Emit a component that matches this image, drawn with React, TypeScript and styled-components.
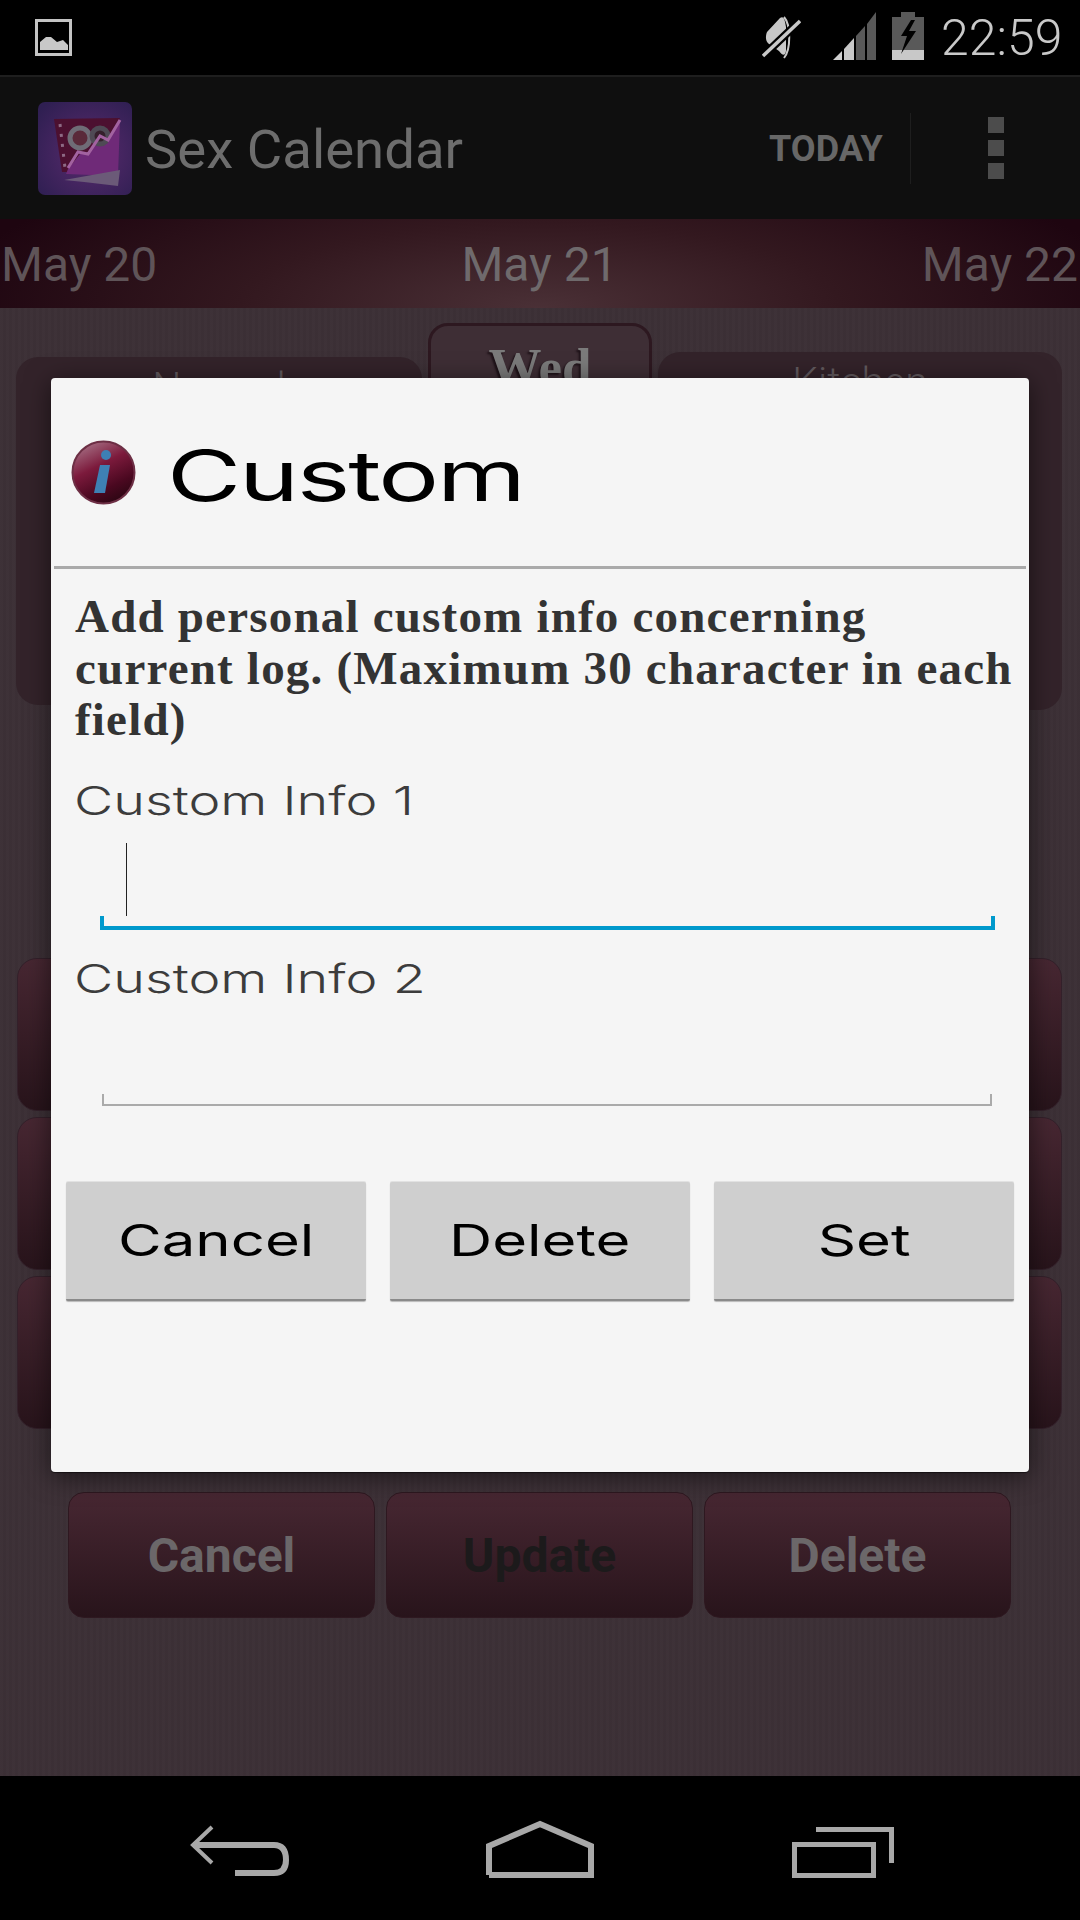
import React from "react";
import styled, { createGlobalStyle } from "styled-components";

const Global = createGlobalStyle`
  html, body { margin: 0; padding: 0; background: #000; }
  * { box-sizing: border-box; }
`;

const Screen = styled.div`
  position: relative;
  width: 1080px;
  height: 1920px;
  display: flex;
  flex-direction: column;
  overflow: hidden;
  font-family: Roboto, "Liberation Sans", sans-serif;
`;

const StatusBar = styled.div`
  height: 75px;
  flex: none;
  background: #000;
  display: flex;
  align-items: flex-start;
  padding: 12px 21px 0 35px;
`;

const StatusLeft = styled.div`
  flex: 1;
  padding-top: 7px;
  display: flex;
`;

const StatusIcon = styled.svg<{ $ml?: number; $mt?: number }>`
  display: block;
  flex: none;
  margin-left: ${(p) => p.$ml ?? 0}px;
  margin-top: ${(p) => p.$mt ?? 0}px;
`;

const Clock = styled.div`
  font-size: 50px;
  font-weight: 300;
  line-height: 48px;
  color: #c9c9c9;
  margin: 2px 0 0 17px;
  width: 118px;
  white-space: nowrap;
`;

const ActionBar = styled.div`
  height: 144px;
  flex: none;
  background: #0f0f0f;
  border-top: 2px solid #1e1e1e;
  display: flex;
  align-items: center;
  padding: 0 76px 0 38px;
`;

const AppTitle = styled.div`
  flex: 1;
  margin: 2px 0 0 13px;
  font-size: 54.500px;
  color: #6d6d6d;
`;

const TodayAction = styled.div`
  font-size: 36px;
  font-weight: 700;
  color: #676767;
  width: 142px;
  height: 71px;
  line-height: 73px;
  border-right: 1px solid #1e1e1e;
`;

const OverflowDots = styled.div`
  margin-left: 77px;
  display: flex;
  flex-direction: column;
  gap: 7px;
`;

const OverflowDot = styled.div`
  width: 16px;
  height: 16px;
  background: #4c4c4c;
`;

const DateBar = styled.div`
  height: 89px;
  flex: none;
  display: flex;
  align-items: center;
  justify-content: space-between;
  padding: 3px 2px 0 1px;
  background: radial-gradient(ellipse 600px 170px at 50% 100%, #4a3036 0%, #33181f 50%, #1e0510 100%);
`;

const DateLabel = styled.div<{ $dim?: boolean }>`
  font-size: 48px;
  line-height: 86px;
  color: ${(p) => (p.$dim ? "#5f5458" : "#6f6a6c")};
`;

const Content = styled.div`
  flex: 1;
  background-color: #3c3036;
  background-image: repeating-linear-gradient(90deg, rgba(255, 255, 255, 0.006) 0 3px, rgba(0, 0, 0, 0.012) 3px 6px);
  padding: 15px 18px 0 16px;
  display: flex;
  flex-direction: column;
`;

const TopRow = styled.div`
  display: grid;
  grid-template-columns: 406px 224px 404px;
  column-gap: 6px;
  align-items: start;
`;

const Panel = styled.div<{ $top: number; $height: number }>`
  margin-top: ${(p) => p.$top}px;
  height: ${(p) => p.$height}px;
  background: #33232a;
  border-radius: 22px;
  text-align: center;
  font-size: 41px;
  font-weight: 300;
  color: #625a5e;
  padding-top: 6px;
`;

const DayTab = styled.div`
  height: 380px;
  border: 3px solid #2d1820;
  border-radius: 20px;
  background: #3e2e35;
  text-align: center;
  font-family: "Liberation Serif", serif;
  font-weight: 700;
  font-size: 53px;
  line-height: 60px;
  padding-top: 11px;
  color: #7b7b7b;
  text-shadow: -2px 2px 2px #1e1218;
`;

const Rows = styled.div`
  margin-top: 248px;
  margin-left: 1px;
  display: flex;
  flex-direction: column;
  gap: 6px;
`;

const LogRow = styled.div`
  height: 153px;
  border-radius: 20px;
  border: 1px solid #33202a;
  background: linear-gradient(#472732, #28141b);
`;

const BottomButtons = styled.div`
  margin: 63px 51px 0 52px;
  display: grid;
  grid-template-columns: repeat(3, 307px);
  column-gap: 11px;
`;

const DimButton = styled.div<{ $dark?: boolean }>`
  height: 126px;
  border-radius: 16px;
  border: 1px solid #2e1820;
  background: linear-gradient(#472732, #28141b);
  display: flex;
  align-items: center;
  justify-content: center;
  font-size: 48px;
  font-weight: 700;
  color: ${(p) => (p.$dark ? "#1c1a1b" : "#6b6769")};
`;

const NavBar = styled.div`
  height: 144px;
  flex: none;
  background: #000;
`;

const NavIcons = styled.svg`
  display: block;
`;

const Dialog = styled.div`
  position: absolute;
  left: 51px;
  top: 378px;
  width: 978px;
  height: 1094px;
  background: #f5f5f5;
  border-radius: 4px;
  box-shadow: 0 4px 26px rgba(0, 0, 0, 0.55), 0 1px 1px rgba(0, 0, 0, 0.5);
  display: flex;
  flex-direction: column;
`;

const DialogHeader = styled.div`
  height: 188px;
  flex: none;
  display: flex;
  align-items: center;
  padding: 0 0 0 20px;
`;

const InfoIcon = styled.svg`
  display: block;
  flex: none;
`;

const Wide = styled.span<{ $sx: number; $center?: boolean }>`
  display: inline-block;
  white-space: nowrap;
  transform: scaleX(${(p) => p.$sx});
  transform-origin: ${(p) => (p.$center ? "center" : "left")} center;
`;

const DialogTitle = styled.div`
  margin: 8px 0 0 31px;
  font-family: Inter, "Liberation Sans", sans-serif;
  font-size: 70px;
  font-weight: 400;
  letter-spacing: -1.500px;
  color: #000;
  line-height: 80px;
`;

const Divider = styled.div`
  height: 3px;
  flex: none;
  margin: 0 3px;
  background: #aaaaaa;
`;

const Message = styled.div`
  margin: 22px 8px 0 24px;
  font-family: "Liberation Serif", serif;
  font-weight: 700;
  font-size: 47px;
  line-height: 51.500px;
  letter-spacing: 1.200px;
  color: #333333;
`;

const FieldLabel = styled.div<{ $top: number }>`
  margin: ${(p) => p.$top}px 0 0 23px;
  font-family: Inter, "Liberation Sans", sans-serif;
  font-weight: 300;
  font-size: 40px;
  line-height: 48px;
  color: #3c3c3c;
`;

const Field = styled.div<{ $active?: boolean }>`
  position: relative;
  height: ${(p) => (p.$active ? 105 : 103)}px;
  margin: ${(p) => (p.$active ? "0 34px 0 49px" : "0 37px 0 51px")};
  border: solid ${(p) => (p.$active ? "#0099cc" : "#aaaaaa")};
  border-width: ${(p) => (p.$active ? "0 4px 4px" : "0 2px 2px")};
`;

const FieldMask = styled.div`
  position: absolute;
  left: -4px;
  right: -4px;
  top: 0;
  height: calc(100% - 10px);
  background: #f5f5f5;
`;

const Caret = styled.div`
  position: absolute;
  left: 22px;
  top: 18px;
  width: 1px;
  height: 73px;
  background: #222;
`;

const DialogButtons = styled.div`
  margin: 76px 15px 0;
  display: grid;
  grid-template-columns: repeat(3, 300px);
  column-gap: 24px;
`;

const DialogButton = styled.div`
  height: 119px;
  background: #cfcfcf;
  border-radius: 2px;
  border-bottom: 2px solid #8a8a8a;
  box-shadow: 0 -1px 0 #e2e2e2, 0 1px 1px rgba(0, 0, 0, 0.25);
  display: flex;
  align-items: center;
  justify-content: center;
  font-family: Inter, "Liberation Sans", sans-serif;
  font-size: 44px;
  color: #000;
`;

function Logo() {
  return (
    <StatusIcon width={94} height={93} viewBox="0 0 94 93">
      <defs>
        <radialGradient id="lg" cx="0.55" cy="0.55" r="0.7">
          <stop offset="0" stopColor="#5a2b6e" />
          <stop offset="1" stopColor="#2f1f52" />
        </radialGradient>
      </defs>
      <rect width="94" height="93" rx="7" fill="url(#lg)" />
      <polygon points="16,17 82,16 72,44 30,70 24,70" fill="#4c1030" />
      <polygon points="30,67 42,52 52,50 60,36 70,38 82,18 80,74 28,72" fill="#6f2a78" />
      <circle cx="42" cy="36" r="10" fill="#5a2a3a" stroke="#6f6c76" strokeWidth="5" />
      <circle cx="62" cy="34" r="8" fill="#35202c" stroke="#4f4a55" strokeWidth="5" />
      <polyline points="30,66 40,50 50,52 62,34 70,38 82,18" fill="none" stroke="#a262a0" strokeWidth="3" />
      <polygon points="26,78 82,68 80,84 46,80" fill="#6b5a78" />
      <line x1="22" y1="22" x2="27" y2="66" stroke="#8d6a84" strokeWidth="3" strokeDasharray="3 7" />
    </StatusIcon>
  );
}

export default function App() {
  return (
    <Screen>
      <Global />
      <StatusBar>
        <StatusLeft>
          <StatusIcon width={37} height={37} viewBox="0 0 37 37">
            <rect x="1.500" y="1.500" width="34" height="34" fill="none" stroke="#c4c4c4" strokeWidth="3" />
            <polygon points="5,31 5,23 11,18 16,18 22,23 28,21 33,26 33,31" fill="#c8c8c8" />
          </StatusIcon>
        </StatusLeft>
        <StatusIcon $mt={3} width={39} height={45} viewBox="0 0 39 45">
          <path d="M5 17 L18 3 C22 0 23 6 24 12 L24 36 C23 42 20 40 17 36 L7 29 C4 27 3 22 5 17Z" fill="#c8c8c8" />
          <path d="M22 2 C29 10 29 34 22 43" fill="none" stroke="#c8c8c8" strokeWidth="2" />
          <line x1="1" y1="41" x2="38" y2="6" stroke="#000" strokeWidth="8" />
          <line x1="1" y1="41" x2="38" y2="6" stroke="#c8c8c8" strokeWidth="3.500" />
        </StatusIcon>
        <StatusIcon $ml={32} width={43} height={48} viewBox="0 0 43 48">
          <polygon points="0,48 9,39 9,48" fill="#d0d0d0" />
          <polygon points="11,37 21,26 21,48 11,48" fill="#c8c8c8" />
          <polygon points="23,24 32,14 32,48 23,48" fill="#595959" />
          <polygon points="34,12 43,0 43,48 34,48" fill="#595959" />
        </StatusIcon>
        <StatusIcon $ml={16} width={32} height={48} viewBox="0 0 32 48">
          <rect x="9" y="0" width="14" height="5" fill="#595959" />
          <rect x="0" y="5" width="32" height="33" fill="#595959" />
          <rect x="0" y="38" width="32" height="10" fill="#c8c8c8" />
          <polygon points="19,8 9,24 15,24 9,42 24,19 17,19 23,8" fill="#000" />
        </StatusIcon>
        <Clock>22:59</Clock>
      </StatusBar>

      <ActionBar>
        <Logo />
        <AppTitle>Sex Calendar</AppTitle>
        <TodayAction>TODAY</TodayAction>
        <OverflowDots>
          <OverflowDot />
          <OverflowDot />
          <OverflowDot />
        </OverflowDots>
      </ActionBar>

      <DateBar>
        <DateLabel $dim>May 20</DateLabel>
        <DateLabel>May 21</DateLabel>
        <DateLabel $dim>May 22</DateLabel>
      </DateBar>

      <Content>
        <TopRow>
          <Panel $top={34} $height={348}>Normal</Panel>
          <DayTab>Wed</DayTab>
          <Panel $top={29} $height={358}>Kitchen</Panel>
        </TopRow>
        <Rows>
          <LogRow />
          <LogRow />
          <LogRow />
        </Rows>
        <BottomButtons>
          <DimButton>Cancel</DimButton>
          <DimButton $dark>Update</DimButton>
          <DimButton>Delete</DimButton>
        </BottomButtons>
      </Content>

      <NavBar>
        <NavIcons width={1080} height={144} viewBox="0 0 1080 144">
          <g fill="none" stroke="#a8a8a8">
            <path d="M212 51 L193 69 L212 87" strokeWidth="4" />
            <path d="M193 69 H274 Q286 69 286 84 Q286 97 274 97 H235" strokeWidth="6" />
            <path d="M489 99 V70 L540 48 L591 70 V99 H489" strokeWidth="6" />
            <path d="M816 53.500 H891.500 V87" strokeWidth="5" />
            <rect x="794.500" y="68.500" width="79" height="31" strokeWidth="5" />
          </g>
        </NavIcons>
      </NavBar>

      <Dialog>
        <DialogHeader>
          <InfoIcon width={65} height={65} viewBox="0 0 65 65">
            <defs>
              <linearGradient id="ig" x1="0.2" y1="0" x2="0.7" y2="1">
                <stop offset="0" stopColor="#a87488" />
                <stop offset="0.4" stopColor="#7c1a3c" />
                <stop offset="0.75" stopColor="#4a0820" />
                <stop offset="1" stopColor="#2a0612" />
              </linearGradient>
            </defs>
            <circle cx="32.500" cy="32.500" r="31" fill="url(#ig)" stroke="#6d2f45" strokeWidth="2" />
            <circle cx="35" cy="15" r="5" fill="#3e80b4" />
            <path d="M29 25 H39 L34 53 H23 Z" fill="#3e80b4" />
          </InfoIcon>
          <DialogTitle>
            <Wide $sx={1.45}>Custom</Wide>
          </DialogTitle>
        </DialogHeader>
        <Divider />
        <Message>Add personal custom info concerning current log. (Maximum 30 character in each field)</Message>
        <FieldLabel $top={31}>
          <Wide $sx={1.347}>Custom Info 1</Wide>
        </FieldLabel>
        <Field $active>
          <FieldMask />
          <Caret />
        </Field>
        <FieldLabel $top={25}>
          <Wide $sx={1.347}>Custom Info 2</Wide>
        </FieldLabel>
        <Field>
          <FieldMask />
        </Field>
        <DialogButtons>
          <DialogButton>
            <Wide $center $sx={1.36}>Cancel</Wide>
          </DialogButton>
          <DialogButton>
            <Wide $center $sx={1.36}>Delete</Wide>
          </DialogButton>
          <DialogButton>
            <Wide $center $sx={1.36}>Set</Wide>
          </DialogButton>
        </DialogButtons>
      </Dialog>
    </Screen>
  );
}
